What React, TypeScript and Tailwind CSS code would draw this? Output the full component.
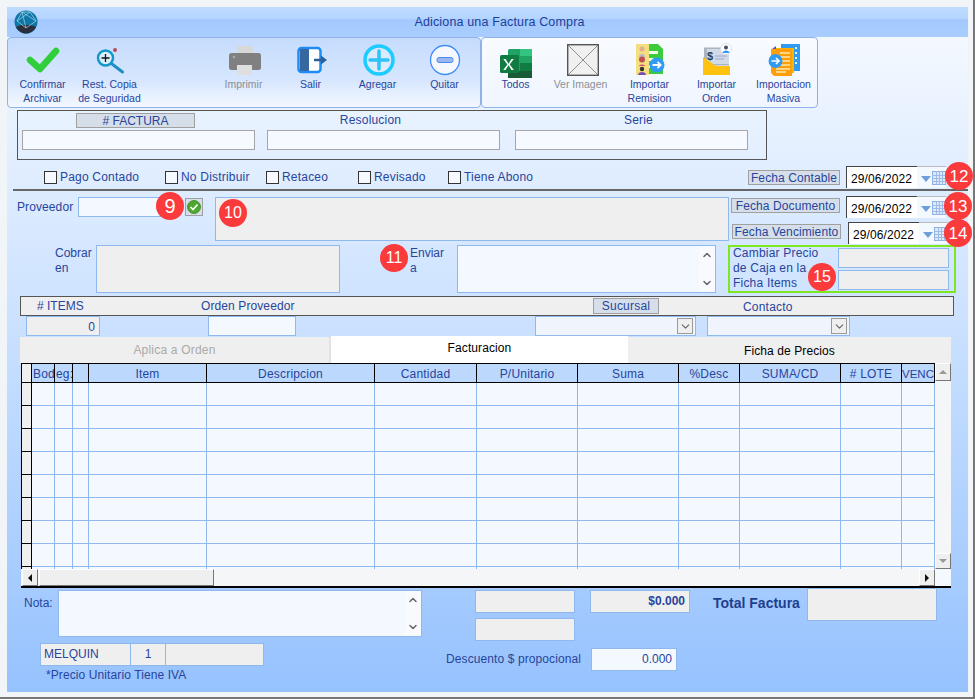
import type { ReactNode } from 'react';
import { ChevronDown, ChevronUp } from 'lucide-react';

const Badge = ({ n, className }: { n: string; className: string }) => (
    <div
        className={`absolute flex h-[28px] w-[28px] items-center justify-center rounded-full bg-[#fb3a3c] leading-none text-white ${className}`}
    >
        {n}
    </div>
);

const ToolButton = ({
    icon,
    lines,
    off,
    className = '',
}: {
    icon: ReactNode;
    lines: string[];
    off?: boolean;
    className?: string;
}) => (
    <div className={`flex w-[67px] flex-col items-center ${className}`}>
        <div className="flex h-[33px] w-[32px] items-start justify-center">{icon}</div>
        {lines.map((l) => (
            <div
                key={l}
                className={`whitespace-nowrap text-[10.5px] leading-[14px] ${off ? 'text-[#8b8f96]' : 'text-[#27459c]'}`}
            >
                {l}
            </div>
        ))}
    </div>
);

const Icon = ({ children }: { children: ReactNode }) => (
    <svg viewBox="0 0 32 32" className="h-[32px] w-[32px] overflow-visible">
        {children}
    </svg>
);

const Check = ({ label, className }: { label: string; className: string }) => (
    <div className={`mt-[10px] flex items-center ${className}`}>
        <div className="h-[13px] w-[13px] border border-[#333] bg-[#f6f9ff]" />
        <span className="ml-[3px] text-[12px] leading-[15px] tracking-[0.2px] text-[#27459c]">{label}</span>
    </div>
);

const DateBox = ({ className = '' }: { className?: string }) => (
    <div className={`flex h-[22px] w-[100px] ${className}`}>
        <div className="h-full w-[72px] border-l border-t border-[#444] bg-white pl-[4px] text-[12px] leading-[24px] tracking-[0.1px] text-black">
            29/06/2022
        </div>
        <div className="flex h-full flex-1 items-center border-t border-[#bbb] bg-[#f4f8ff] pl-[4px]">
            <svg viewBox="0 0 10 6" className="mt-[2px] h-[6px] w-[10px]">
                <path d="M0 0h10L5 6z" fill="#6c9fdc" />
            </svg>
            <svg viewBox="0 0 14 14" className="ml-px h-[14px] w-[14px]">
                <rect x="0.5" y="0.5" width="13" height="13" fill="#dfe8f8" stroke="#8fb0e2" />
                <path d="M0 4.5h14M0 7.5h14M0 10.5h14M4.5 0v14M7.5 0v14M10.5 0v14" stroke="#9dbbe8" strokeWidth="1" />
            </svg>
        </div>
    </div>
);

const SideArrows = () => (
    <div className="flex h-full w-[16px] flex-col items-center justify-between bg-[#f8fafd] py-[3px] text-[#666]">
        <ChevronUp size={12} strokeWidth={3} />
        <ChevronDown size={12} strokeWidth={3} />
    </div>
);

const SelectBox = ({ className }: { className: string }) => (
    <div className={`flex h-[20px] items-center justify-end border border-[#8fb8ec] bg-[#eff4fd] pr-[2px] ${className}`}>
        <div className="flex h-[16px] w-[16px] items-center justify-center border border-[#9a9a9a] bg-[#efefef] text-[#666]">
            <ChevronDown size={13} strokeWidth={2} />
        </div>
    </div>
);

const columns = [
    { w: 'w-[23px]', label: 'Bod', cls: 'pl-px tracking-[0.2px]' },
    { w: 'w-[18px]', label: 'eg:', cls: 'pl-px tracking-[0.2px]' },
    { w: 'w-[16px]', label: '', cls: '' },
    { w: 'w-[118px]', label: 'Item', cls: 'text-center tracking-[0.2px]' },
    { w: 'w-[168px]', label: 'Descripcion', cls: 'text-center tracking-[0.2px]' },
    { w: 'w-[102px]', label: 'Cantidad', cls: 'text-center tracking-[0.2px]' },
    { w: 'w-[101px]', label: 'P/Unitario', cls: 'text-center tracking-[0.2px]' },
    { w: 'w-[101px]', label: 'Suma', cls: 'text-center tracking-[0.2px]' },
    { w: 'w-[61px]', label: '%Desc', cls: 'text-center tracking-[0.2px]' },
    { w: 'w-[101px]', label: 'SUMA/CD', cls: 'text-center tracking-[0.2px]' },
    { w: 'w-[61px]', label: '# LOTE', cls: 'text-center tracking-[0.2px]' },
    { w: 'w-[33px]', label: 'VENC', cls: 'text-[11.5px]' },
];

const Triangle = ({ d, fill = '#111' }: { d: string; fill?: string }) => (
    <svg viewBox="0 0 8 8" className="h-[8px] w-[8px]">
        <path d={d} fill={fill} />
    </svg>
);

const bevel = 'border border-b-[#777] border-l-white border-r-[#777] border-t-white bg-[#efefef]';

export default function App() {
    return (
        <div className="h-[699px] w-[975px] overflow-hidden border-b-2 border-r-2 border-[#777] bg-[#f2f5f8] pl-[7px] pt-[7px] font-['Liberation_Sans',Arial,sans-serif]">
            <div className="relative h-[685px] w-[961px] bg-gradient-to-b from-[#f8fbff] to-[#96c2fe] text-[#27459c]">
                {/* title bar */}
                <div className="relative flex h-[30px] items-center justify-center bg-[linear-gradient(#c0dcff,#b4d5ff_38%,#a4c9fe_42%,#a9cdff)] pl-[24px] text-[12.5px] tracking-[0.15px] text-[#1d3f9a]">
                    <svg viewBox="0 0 24 24" className="absolute left-[7px] top-[3px] h-[24px] w-[24px]">
                        <circle cx="12" cy="12" r="11.5" fill="#0f77a8" />
                        <path d="M2 17c5-3 14-3 20 0-2 4-6 6.500-10 6.500S4 21 2 17z" fill="#2b2f3d" />
                        <path d="M8 2l-5 9 9 7 10-7-6-9-8 0M3 11l13-9M8 2l4 16M22 11L8 2" fill="none" stroke="#a9d6ea" strokeWidth="0.7" />
                    </svg>
                    <span>Adiciona una Factura Compra</span>
                </div>

                {/* toolbar */}
                <div className="flex h-[71px]">
                    <div className="flex h-full w-[474px] rounded-[4px] border border-[#8fb3e8] bg-gradient-to-b from-[#c6dcfd] via-[#d6e6fe] via-60% to-[#f4f8ff] pl-[1px] pt-[6px]">
                        <ToolButton
                            lines={['Confirmar', 'Archivar']}
                            icon={
                                <Icon>
                                    <path d="M3 16l10 9L29 7" fill="none" stroke="#2fce3a" strokeWidth="6.500" strokeLinecap="round" strokeLinejoin="round" />
                                </Icon>
                            }
                        />
                        <ToolButton
                            lines={['Rest. Copia', 'de Seguridad']}
                            icon={
                                <Icon>
                                    <circle cx="21" cy="6" r="2" fill="#b94a58" />
                                    <circle cx="11.500" cy="14" r="7.500" fill="#dbeefb" stroke="#1497c9" strokeWidth="2.500" />
                                    <path d="M7.500 14h8M11.500 10v8" stroke="#111" strokeWidth="1.300" />
                                    <path d="M18 20l10.500 8" stroke="#1f8fc4" strokeWidth="3" strokeLinecap="round" />
                                </Icon>
                            }
                        />
                        <ToolButton
                            className="ml-[67px]"
                            off
                            lines={['Imprimir']}
                            icon={
                                <Icon>
                                    <rect x="9" y="2" width="16" height="9" rx="1.500" fill="#d8d8d8" />
                                    <rect x="1" y="9" width="32" height="17" rx="2.500" fill="#808080" />
                                    <circle cx="6" cy="13" r="1.200" fill="#aaa" />
                                    <rect x="9" y="21" width="15" height="10" fill="#dfdfdf" />
                                </Icon>
                            }
                        />
                        <ToolButton
                            lines={['Salir']}
                            icon={
                                <Icon>
                                    <rect x="3.500" y="4" width="22" height="24" rx="3" fill="#fff" stroke="#1d8cf5" strokeWidth="2.500" />
                                    <path d="M5 5h9v22H5z" fill="#36689f" />
                                    <path d="M19 16h8" fill="none" stroke="#2f5f96" strokeWidth="2.500" />
                                    <path d="M26 11.500l6 4.500-6 4.500z" fill="#2f5f96" />
                                </Icon>
                            }
                        />
                        <ToolButton
                            lines={['Agregar']}
                            icon={
                                <Icon>
                                    <circle cx="17" cy="16" r="14" fill="#e8f4ff" fillOpacity="0.5" stroke="#1ccbff" strokeWidth="3.500" />
                                    <path d="M8 16h18M17 7v18" stroke="#2cc4f5" strokeWidth="3.500" strokeLinecap="round" />
                                </Icon>
                            }
                        />
                        <ToolButton
                            lines={['Quitar']}
                            icon={
                                <Icon>
                                    <circle cx="16" cy="16" r="14.500" fill="#f5f9ff" stroke="#3f8cff" strokeWidth="1.300" />
                                    <rect x="8" y="13.500" width="16" height="5" rx="2" fill="#9ab8f0" stroke="#4d8af0" strokeWidth="1" />
                                </Icon>
                            }
                        />
                    </div>
                    <div className="flex h-full w-[337px] rounded-[4px] border border-[#8fb3e8] bg-gradient-to-b from-[#f8fbff] to-[#f0f6ff] pt-[6px]">
                        <ToolButton
                            lines={['Todos']}
                            icon={
                                <Icon>
                                    <rect x="8" y="5" width="24" height="29" rx="1.500" fill="#21a366" />
                                    <path d="M20 5h12v7H20z" fill="#33c481" />
                                    <path d="M20 19h12v8H20z" fill="#107c41" />
                                    <path d="M8 27h24v7H8z" fill="#185c37" />
                                    <rect x="0" y="11" width="19" height="18" rx="1.500" fill="#107c41" />
                                    <path d="M5.500 15l3 4.800 3-4.800h2.300l-4.100 5.500 4.200 5.500h-2.400l-3-4.700-3 4.700H3.200l4.200-5.500L3.300 15z" fill="#fff" />
                                </Icon>
                            }
                        />
                        <ToolButton
                            className="-ml-[2px]"
                            off
                            lines={['Ver Imagen']}
                            icon={
                                <Icon>
                                    <g transform="translate(2 0)">
                                        <rect x="0.700" y="0.700" width="30.600" height="30.600" fill="#f0f0f0" stroke="#555" strokeWidth="1.400" />
                                        <path d="M1 1l30 30M31 1L1 31" stroke="#666" strokeWidth="0.700" />
                                    </g>
                                </Icon>
                            }
                        />
                        <ToolButton
                            className="ml-[2px]"
                            lines={['Importar', 'Remision']}
                            icon={
                                <Icon>
                                    <path d="M13 0h11l5 5v25H13z" fill="#3ccb3c" />
                                    <path d="M15 7h9v3h-9zM15 14h9v3h-9zM15 21h9v3h-9z" fill="#f4fbe8" />
                                    <rect x="2" y="0" width="13" height="31" fill="#f4de80" />
                                    <circle cx="8" cy="5" r="2.500" fill="#e0b090" />
                                    <path d="M5 13c0-4 6-4 6 0z" fill="#b8b8c8" />
                                    <circle cx="8" cy="15.500" r="3" fill="#c0504d" />
                                    <path d="M5 22c0-2 6-2 6 0z" fill="#d05a6a" />
                                    <circle cx="8" cy="25" r="2.200" fill="#333" />
                                    <path d="M4 31c0-4 8-4 8 0z" fill="#7a4fb0" />
                                    <circle cx="23" cy="21" r="7.500" fill="#2f9bf2" />
                                    <path d="M18.500 21h8M23.500 17.800l3.200 3.200-3.200 3.200" stroke="#fff" strokeWidth="1.800" fill="none" />
                                </Icon>
                            }
                        />
                        <ToolButton
                            lines={['Importar', 'Orden']}
                            icon={
                                <Icon>
                                    <rect x="3" y="3.500" width="25" height="18" fill="#aab4c2" />
                                    <rect x="6" y="5" width="22" height="15" fill="#d2dae6" />
                                    <text x="6" y="16" fontSize="11" fontWeight="700" fill="#2f3f55" fontFamily="'Liberation Sans', sans-serif">
                                        $
                                    </text>
                                    <path d="M14 12h12M14 15h9" stroke="#9aa8d0" strokeWidth="1" />
                                    <path d="M2 13l13 9h14v9H2z" fill="#ffc30f" />
                                    <circle cx="25" cy="5" r="5.500" fill="#fff" stroke="#d8d8d8" strokeWidth="0.800" />
                                    <circle cx="25" cy="3.500" r="2" fill="#40506a" />
                                    <path d="M21.500 9c0-3.500 7-3.500 7 0z" fill="#2f9bf2" />
                                </Icon>
                            }
                        />
                        <ToolButton
                            lines={['Importacion', 'Masiva']}
                            icon={
                                <Icon>
                                    <rect x="13" y="0" width="19" height="27" fill="#2f9bf2" />
                                    <path d="M27 3h2v2h-2zM27 8h2v2h-2zM27 13h2v2h-2zM27 18h2v2h-2z" fill="#dff" />
                                    <path d="M6 4h20v25H6z" fill="#ffb400" />
                                    <path d="M4 5l4-3v3z" fill="#6a4fb0" />
                                    <path d="M3 5h21v27H6l-3-3z" fill="#ff9e0d" />
                                    <path d="M12 9h10M12 13h10M12 17h10M12 21h10M8 25h14M8 28h10" stroke="#ffe8a8" strokeWidth="1.300" />
                                    <circle cx="7.500" cy="17" r="7" fill="#2f9bf2" />
                                    <path d="M3.500 17h7.500M8 14l3 3-3 3" stroke="#fff" strokeWidth="1.700" fill="none" />
                                </Icon>
                            }
                        />
                    </div>
                </div>

                {/* factura / resolucion / serie */}
                <div className="ml-[10px] mt-[2px] flex h-[50px] w-[750px] border border-[#555] pl-[4px] pt-[2px] text-[12px]">
                    <div className="w-[233px]">
                        <div className="ml-[54px] h-[15px] w-[119px] border border-[#a0a0a0] bg-[#d6dfe9] text-center leading-[14px]">
                            # FACTURA
                        </div>
                        <div className="mt-[2px] h-[20px] w-full border border-[#a5a5a5] bg-[#f6f9ff]" />
                    </div>
                    <div className="ml-[12px] w-[233px]">
                        <div className="h-[15px] pr-[26px] text-center leading-[14px] tracking-[0.2px]">Resolucion</div>
                        <div className="mt-[2px] h-[20px] w-full border border-[#a5a5a5] bg-[#f6f9ff]" />
                    </div>
                    <div className="ml-[15px] w-[233px]">
                        <div className="h-[15px] pl-[14px] text-center leading-[14px] tracking-[0.2px]">Serie</div>
                        <div className="mt-[2px] h-[20px] w-full border border-[#a5a5a5] bg-[#f6f9ff]" />
                    </div>
                </div>

                {/* checks */}
                <div className="ml-[6px] flex h-[31px] items-start border-b-2 border-[#666] pl-[31px]">
                    <Check label="Pago Contado" className="w-[121px]" />
                    <Check label="No Distribuir" className="w-[101px]" />
                    <Check label="Retaceo" className="w-[92px]" />
                    <Check label="Revisado" className="w-[90px]" />
                    <Check label="Tiene Abono" className="w-[300px]" />
                    <div className="mt-[10px] h-[15px] w-[92px] border border-[#a0a0a0] bg-[#d6dfe9] text-center text-[12px] leading-[15px] tracking-[0.1px]">
                        Fecha Contable
                    </div>
                    <DateBox className="ml-[6px] mt-[6px]" />
                </div>

                {/* proveedor + fechas */}
                <div className="ml-[6px] flex text-[12px]">
                    <div className="w-[716px] pt-[6px]">
                        <div className="flex items-start">
                            <span className="ml-[4px] mt-[1px] w-[61px] tracking-[0.1px]">Proveedor</span>
                            <div className="h-[20px] w-[94px] border border-[#8fb8ec] bg-[#f4f8ff]" />
                            <div className="ml-[13px] mt-[1px] flex h-[18px] w-[18px] items-center justify-center border border-[#a0a0a0] bg-[#d6dfe9]">
                                <svg viewBox="0 0 14 14" className="h-[14px] w-[14px]">
                                    <circle cx="7" cy="7" r="6.500" fill="#4fa82e" stroke="#3a7f22" strokeWidth="0.800" />
                                    <path d="M3.500 7l2.500 2.500 4.500-5" fill="none" stroke="#fff" strokeWidth="1.600" />
                                </svg>
                            </div>
                            <div className="ml-[12px] h-[44px] w-[514px] border border-[#8fb8ec] bg-[#efefef]" />
                        </div>
                        <div className="mt-[4px] flex h-[48px]">
                            <div className="ml-[42px] w-[41px] pt-[1px] leading-[15px]">
                                Cobrar
                                <br />
                                en
                            </div>
                            <div className="h-[48px] w-[244px] border border-[#8fb8ec] bg-[#efefef]" />
                            <div className="ml-[70px] w-[47px] pt-[1px] leading-[15px]">
                                Enviar
                                <br />a
                            </div>
                            <div className="flex h-[48px] w-[259px] justify-end border border-[#8fb8ec] bg-[#f4f8ff]">
                                <SideArrows />
                            </div>
                        </div>
                    </div>
                    <div className="flex-1 pt-[5px]">
                        <div className="flex h-[26px] items-start">
                            <div className="ml-[2px] mt-[2px] h-[15px] w-[109px] border border-[#a0a0a0] bg-[#d6dfe9] text-center leading-[15px] tracking-[0.1px]">
                                Fecha Documento
                            </div>
                            <DateBox className="ml-[6px]" />
                        </div>
                        <div className="flex h-[23px] items-start">
                            <div className="ml-[3px] mt-[2px] h-[15px] w-[109px] border border-[#a0a0a0] bg-[#d6dfe9] text-center leading-[15px] tracking-[0.1px]">
                                Fecha Vencimiento
                            </div>
                            <DateBox className="ml-[7px]" />
                        </div>
                        <div className="-ml-px flex h-[48px] w-[228px] border-2 border-[#7fe622] pl-[3px]">
                            <div className="-mt-px w-[105px] leading-[15px] tracking-[0.2px]">
                                Cambiar Precio
                                <br />
                                de Caja en la
                                <br />
                                Ficha Items
                            </div>
                            <div className="pt-px">
                                <div className="h-[20px] w-[111px] border border-[#8fb8ec] bg-[#efefef]" />
                                <div className="mt-[2px] h-[20px] w-[111px] border border-[#8fb8ec] bg-[#efefef]" />
                            </div>
                        </div>
                    </div>
                </div>

                {/* items bar */}
                <div className="ml-[13px] mt-[3px] flex h-[20px] w-[934px] items-center border border-[#555] bg-[#efefef] pl-[16px] text-[12px] leading-[20px]">
                    <span className="w-[164px]">
                        # ITEMS
                    </span>
                    <span className="w-[392px] tracking-[0.1px]">Orden Proveedor</span>
                    <div className="h-[16px] w-[66px] border border-[#a0a0a0] bg-[#d6dfe9] text-center leading-[15px] tracking-[0.2px]">Sucursal</div>
                    <span className="ml-[84px] mt-[2px] tracking-[0.2px]">Contacto</span>
                </div>
                <div className="ml-[19px] flex h-[20px] text-[12px]">
                    <div className="h-[20px] w-[74px] border border-[#8fb8ec] bg-[#efefef] pr-[4px] text-right leading-[20px]">0</div>
                    <div className="ml-[108px] h-[20px] w-[88px] border border-[#8fb8ec] bg-[#f4f8ff]" />
                    <SelectBox className="ml-[239px] w-[161px]" />
                    <SelectBox className="ml-[11px] w-[143px]" />
                </div>

                {/* tabs */}
                <div className="ml-[13px] flex h-[27px] items-end text-[12px]">
                    <div className="h-[26px] w-[311px] border-r-2 border-[#e2e2e2] bg-[#efefef] text-center leading-[26px] tracking-[0.2px] text-[#aaa]">
                        Aplica a Orden
                    </div>
                    <div className="h-[27px] w-[297px] bg-white text-center leading-[25px] tracking-[0.1px] text-black">Facturacion</div>
                    <div className="h-[26px] w-[323px] bg-[#efefef] text-center leading-[28px] tracking-[0.1px] text-black">Ficha de Precios</div>
                </div>

                {/* grid */}
                <div className="ml-[14px] flex h-[225px] w-[930px] flex-col border-b-2 border-black bg-[#f5f6f8] text-[12px]">
                    <div className="flex h-[206px]">
                        <div className="h-[206px] w-[914px] overflow-hidden">
                            <div className="flex h-[20px] border-b border-t border-black bg-[#bcd8fd]">
                                <div className="h-full w-[11px] border-l border-r border-black bg-[#efefef]" />
                                {columns.map((c, i) => (
                                    <div
                                        key={i}
                                        className={`${c.w} ${c.cls} h-full whitespace-nowrap border-r border-black leading-[20px]`}
                                    >
                                        {c.label}
                                    </div>
                                ))}
                            </div>
                            {Array.from({ length: 9 }).map((_, r) => (
                                <div key={r} className="flex h-[23px] border-b border-[#8fb8ec] bg-[#f4f8ff]">
                                    <div className="h-[23px] w-[11px] border-b border-l border-r border-black bg-[#efefef]" />
                                    {columns.map((c, i) => (
                                        <div key={i} className={`${c.w} h-full border-r border-[#8fb8ec]`} />
                                    ))}
                                </div>
                            ))}
                        </div>
                        <div className="flex w-[16px] flex-col justify-between bg-[#f5f6f8]">
                            <div className={`flex h-[18px] items-center justify-center ${bevel}`}>
                                <Triangle d="M4 2l4 4H0z" fill="#999" />
                            </div>
                            <div className={`flex h-[16px] items-center justify-center ${bevel}`}>
                                <Triangle d="M0 2h8L4 6z" fill="#999" />
                            </div>
                        </div>
                    </div>
                    <div className="flex h-[17px] items-stretch">
                        <div className="flex h-full w-[914px] pl-px">
                            <div className={`flex w-[16px] items-center justify-center ${bevel}`}>
                                <Triangle d="M6 0v8L2 4z" />
                            </div>
                            <div className={`ml-px w-[175px] ${bevel}`} />
                            <div className="flex-1" />
                            <div className={`flex w-[16px] items-center justify-center ${bevel}`}>
                                <Triangle d="M2 0v8l4-4z" />
                            </div>
                        </div>
                        <div className="w-[16px] bg-[#f4f8ff]" />
                    </div>
                </div>

                {/* bottom */}
                <div className="ml-[17px] flex text-[12px]">
                    <div className="w-[398px] pt-[2px]">
                        <div className="flex">
                            <span className="mt-[4px] w-[34px]">Nota:</span>
                            <div className="flex h-[47px] w-[364px] justify-end border border-[#8fb8ec] bg-[#f4f8ff]">
                                <SideArrows />
                            </div>
                        </div>
                        <div className="ml-[16px] mt-[6px] flex h-[23px]">
                            <div className="h-full w-[91px] border border-[#8fb8ec] bg-[#efefef] pl-[3px] leading-[20px]">MELQUIN</div>
                            <div className="h-full w-[35px] border-y border-r border-[#8fb8ec] bg-[#efefef] text-center leading-[20px]">1</div>
                            <div className="h-full w-[98px] border-y border-r border-[#8fb8ec] bg-[#efefef]" />
                        </div>
                        <div className="ml-[22px] tracking-[0.1px]">*Precio Unitario Tiene IVA</div>
                    </div>
                    <div className="ml-[24px] w-[244px] pt-[2px]">
                        <div className="ml-[29px] flex">
                            <div className="h-[23px] w-[100px] border border-[#8fb8ec] bg-[#efefef]" />
                            <div className="ml-[15px] h-[23px] w-[100px] border border-[#8fb8ec] bg-[#efefef] pr-[4px] text-right font-bold leading-[21px]">
                                $0.000
                            </div>
                        </div>
                        <div className="ml-[29px] mt-[5px] h-[23px] w-[100px] border border-[#8fb8ec] bg-[#efefef]" />
                        <div className="mt-[7px] flex">
                            <span className="mt-[2px] w-[145px] whitespace-nowrap tracking-[0.1px]">Descuento $ propocional</span>
                            <div className="h-[23px] w-[86px] border border-[#8fb8ec] bg-[#f4f8ff] pr-[4px] text-right leading-[20px]">0.000</div>
                        </div>
                    </div>
                    <div className="ml-[23px] flex items-start">
                        <span className="mt-[5px] w-[94px] whitespace-nowrap text-[14px] font-bold text-[#1d3f8f]">Total Factura</span>
                        <div className="h-[33px] w-[130px] border border-[#8fb8ec] bg-[#efefef]" />
                    </div>
                </div>

                {/* red markers */}
                <Badge n="9" className="left-[149px] top-[185px] text-[20px]" />
                <Badge n="10" className="left-[212px] top-[192px] text-[16px]" />
                <Badge n="11" className="left-[373px] top-[237px] text-[16px]" />
                <Badge n="12" className="left-[938px] top-[155px] text-[17px]" />
                <Badge n="13" className="left-[937px] top-[185px] text-[17px]" />
                <Badge n="14" className="left-[937px] top-[212px] text-[17px]" />
                <Badge n="15" className="left-[801px] top-[256px] text-[16px]" />
            </div>
        </div>
    );
}
